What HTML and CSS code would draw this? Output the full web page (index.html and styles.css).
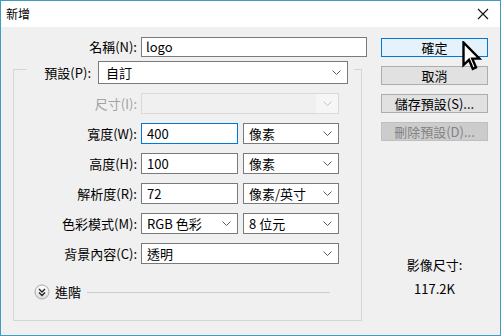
FILE: index.html
```html
<!DOCTYPE html>
<html lang="zh-Hant">
<head>
    <title>新增</title>
    <meta charset="UTF-8" />
    <link rel="stylesheet" href="styles.css">
</head>
<body>
    <div class="window">
        <div class="titlebar">
            <span class="title">新增</span>
            <svg class="close" width="12" height="12" viewBox="0 0 12 12">
                <path d="M1 1 L11 11 M11 1 L1 11" stroke="#111" stroke-width="1.1" fill="none" />
            </svg>
        </div>

        <div class="body">
            <div class="form">
                <div class="name-row">
                    <label class="label">名稱(N):</label>
                    <div class="field field-name">logo</div>
                </div>

                <div class="group">
                    <div class="legend">
                        <label class="label legend-label">預設(P):</label>
                        <div class="select select-preset">
                            <span>自訂</span>
                            <svg class="chev" width="9" height="5" viewBox="0 0 9 5"><polyline points="0.5,0.5 4.5,4.5 8.5,0.5" /></svg>
                        </div>
                    </div>

                    <div class="row">
                        <label class="label label-disabled">尺寸(I):</label>
                        <div class="select select-wide select-disabled">
                            <span></span>
                            <div class="drop"><svg class="chev" width="9" height="5" viewBox="0 0 9 5"><polyline points="0.5,0.5 4.5,4.5 8.5,0.5" /></svg></div>
                        </div>
                    </div>

                    <div class="row">
                        <label class="label">寬度(W):</label>
                        <div class="field field-focus">400</div>
                        <div class="select select-unit">
                            <span>像素</span>
                            <svg class="chev" width="9" height="5" viewBox="0 0 9 5"><polyline points="0.5,0.5 4.5,4.5 8.5,0.5" /></svg>
                        </div>
                    </div>

                    <div class="row">
                        <label class="label">高度(H):</label>
                        <div class="field">100</div>
                        <div class="select select-unit">
                            <span>像素</span>
                            <svg class="chev" width="9" height="5" viewBox="0 0 9 5"><polyline points="0.5,0.5 4.5,4.5 8.5,0.5" /></svg>
                        </div>
                    </div>

                    <div class="row">
                        <label class="label">解析度(R):</label>
                        <div class="field">72</div>
                        <div class="select select-unit">
                            <span>像素/英寸</span>
                            <svg class="chev" width="9" height="5" viewBox="0 0 9 5"><polyline points="0.5,0.5 4.5,4.5 8.5,0.5" /></svg>
                        </div>
                    </div>

                    <div class="row">
                        <label class="label">色彩模式(M):</label>
                        <div class="select select-short">
                            <span>RGB 色彩</span>
                            <svg class="chev" width="9" height="5" viewBox="0 0 9 5"><polyline points="0.5,0.5 4.5,4.5 8.5,0.5" /></svg>
                        </div>
                        <div class="select select-unit">
                            <span>8 位元</span>
                            <svg class="chev" width="9" height="5" viewBox="0 0 9 5"><polyline points="0.5,0.5 4.5,4.5 8.5,0.5" /></svg>
                        </div>
                    </div>

                    <div class="row">
                        <label class="label">背景內容(C):</label>
                        <div class="select select-wide">
                            <span>透明</span>
                            <svg class="chev" width="9" height="5" viewBox="0 0 9 5"><polyline points="0.5,0.5 4.5,4.5 8.5,0.5" /></svg>
                        </div>
                    </div>

                    <div class="advanced">
                        <svg class="toggle" width="16" height="16" viewBox="0 0 16 16">
                            <defs>
                                <linearGradient id="knob" x1="0" y1="0" x2="0" y2="1">
                                    <stop offset="0" stop-color="#ffffff" />
                                    <stop offset="1" stop-color="#dcdcdc" />
                                </linearGradient>
                            </defs>
                            <circle cx="8" cy="8" r="7" fill="url(#knob)" stroke="#a8a8a8" />
                            <polyline points="5,5 8,8 11,5" fill="none" stroke="#222" stroke-width="1.3" />
                            <polyline points="5,8.5 8,11.5 11,8.5" fill="none" stroke="#222" stroke-width="1.3" />
                        </svg>
                        <span class="advanced-text">進階</span>
                        <div class="advanced-line"></div>
                    </div>
                </div>
            </div>

            <div class="side">
                <button class="btn btn-default">確定</button>
                <button class="btn">取消</button>
                <button class="btn">儲存預設(S)...</button>
                <button class="btn btn-disabled">刪除預設(D)...</button>

                <div class="image-size">
                    <div class="image-size-label">影像尺寸:</div>
                    <div class="image-size-value">117.2K</div>
                </div>
            </div>
        </div>

        <svg class="cursor" width="20" height="31" viewBox="0 0 20 31">
            <path d="M1.5 1.5 L1.5 24 L7 18.8 L10.8 27.8 L14 26.4 L10.3 17.6 L17.5 17.6 Z" fill="#fff" stroke="#000" stroke-width="2.4" stroke-linejoin="miter" />
        </svg>
    </div>
</body>
</html>
```

FILE: styles.css
```css
* {
    box-sizing: border-box;
}

body {
    margin: 0;
    font-family: "Noto Sans CJK TC", sans-serif;
    font-size: 13px;
    color: #000;
    background: #f0f0f0;
}

.window {
    position: relative;
    width: 501px;
    height: 336px;
    border: 1px solid #3f9cc2;
    background: #f0f0f0;
    display: flex;
    flex-direction: column;
}

.titlebar {
    height: 26px;
    background: #fff;
    display: flex;
    align-items: center;
    justify-content: space-between;
    padding: 0 11px 0 5px;
}

.title {
    font-size: 12px;
    line-height: 16px;
}

.body {
    flex: 1;
    display: flex;
    gap: 19px;
    padding: 10px 0 0 12px;
}

.form {
    width: 349px;
    flex-shrink: 0;
}

.label {
    text-align: right;
    line-height: 16px;
    white-space: nowrap;
    flex-shrink: 0;
}

.label-disabled {
    color: #a3a3a3;
}

.name-row {
    display: flex;
    align-items: center;
    gap: 4px;
    width: 354px;
}

.name-row .label {
    width: 124px;
}

.field {
    height: 21px;
    width: 97px;
    flex-shrink: 0;
    background: #fff;
    border: 1px solid #7a7a7a;
    padding: 0 5px;
    line-height: 19px;
}

.field-name {
    width: 226px;
    height: 20px;
    line-height: 18px;
    padding-left: 4px;
}

.field-focus {
    border-color: #0078d7;
}

.group {
    margin-top: 12px;
    width: 349px;
    height: 252px;
    border: 1px solid #d5d5d5;
    display: flex;
    flex-direction: column;
    gap: 9px;
}

.legend {
    margin: -9px 0 0 13px;
    width: 327px;
    padding-right: 6px;
    background: #f0f0f0;
    display: flex;
    align-items: center;
    gap: 7px;
}

.legend-label {
    width: 64px;
}

.row {
    display: flex;
    align-items: center;
    gap: 5px;
}

.row .label {
    width: 123px;
    margin-right: -1px;
}

.select {
    height: 21px;
    flex-shrink: 0;
    background: #fff;
    border: 1px solid #7a7a7a;
    display: flex;
    align-items: center;
    justify-content: space-between;
    padding: 0 6px 0 5px;
    line-height: 19px;
}

.select-preset {
    width: 250px;
    height: 23px;
    padding-left: 7px;
}

.select-wide {
    width: 198px;
}

.select-unit {
    width: 96px;
}

.select-short {
    width: 97px;
}

.select-disabled {
    background: #f0f0f0;
    border-color: #d9d9d9;
    padding: 0;
}

.drop {
    width: 22px;
    height: 100%;
    background: #f6f6f6;
    display: flex;
    align-items: center;
    justify-content: center;
}

.chev {
    fill: none;
    stroke: #5a5a5a;
    stroke-width: 1;
}

.select-disabled .chev {
    stroke: #c4c4c4;
}

.advanced {
    margin-top: 10px;
    display: flex;
    align-items: center;
    height: 18px;
    padding-left: 20px;
    padding-right: 31px;
}

.advanced-text {
    margin-left: 5px;
    line-height: 16px;
}

.advanced-line {
    flex: 1;
    height: 1px;
    background: #cdcdcd;
    margin-left: 6px;
}

.side {
    width: 107px;
    padding-top: 1px;
    display: flex;
    flex-direction: column;
    gap: 9px;
}

.btn {
    height: 19px;
    width: 107px;
    padding: 0;
    font-family: inherit;
    font-size: 13px;
    line-height: 16px;
    color: #000;
    background: #e1e1e1;
    border: 1px solid #adadad;
}

.btn-default {
    background: #e5f1fb;
    border-color: #0078d7;
}

.btn-disabled {
    background: #cccccc;
    border-color: #bfbfbf;
    color: #838383;
}

.image-size {
    margin-top: 107px;
    text-align: center;
    line-height: 16px;
}

.image-size-value {
    margin-top: 8px;
}

.cursor {
    position: absolute;
    left: 461px;
    top: 40px;
}
```
